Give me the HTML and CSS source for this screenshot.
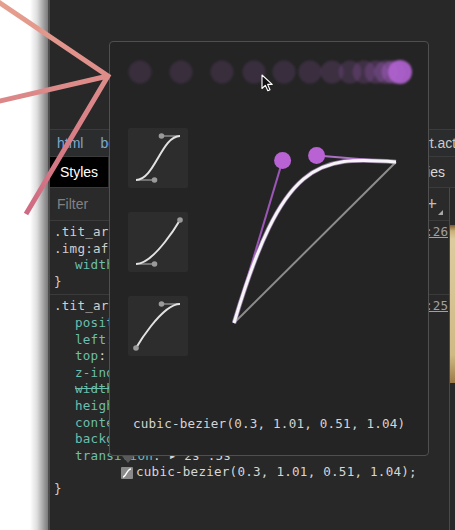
FILE: index.html
```html
<!DOCTYPE html>
<html>
<head>
<meta charset="utf-8">
<link rel="stylesheet" href="styles.css">
</head>
<body>
<div class="page">
  <div class="shade"></div>
  <div class="devtools">
    <div class="top"><div class="frame-tag">&lt;/iframe&gt;</div></div>
    <div class="crumbs">
      <span>html</span><span>body</span><span>div.wrap</span>
      <span class="crumb-end">div.tit_art.active</span>
    </div>
    <div class="tabs">
      <div class="tab-active">Styles</div>
      <div class="tab-right">Properties</div>
    </div>
    <div class="body">
      <div class="styles">
        <div class="filter">
          <span class="filter-text">Filter</span>
          <span class="filter-tools"><span class="plus">+</span><span class="corner"></span></span>
        </div>
        <div class="rule rule-first">
          <div class="line"><span class="sel">.tit_arrow,</span><span class="src">style.css:26</span></div>
          <div class="line sel">.img:after {</div>
          <div class="line indent"><span class="prop">width</span>: 40px;</div>
          <div class="line sel">}</div>
        </div>
        <div class="rule">
          <div class="line"><span class="sel">.tit_arrow {</span><span class="src">style.css:25</span></div>
          <div class="line indent"><span class="prop">position</span>: absolute;</div>
          <div class="line indent"><span class="prop">left</span>: 0;</div>
          <div class="line indent"><span class="prop">top</span>: 0;</div>
          <div class="line indent"><span class="prop">z-index</span>: 2;</div>
          <div class="line indent strike"><span class="prop">width</span>: 100%;</div>
          <div class="line indent"><span class="prop">height</span>: 100%;</div>
          <div class="line indent"><span class="prop">content</span>: '';</div>
          <div class="line indent"><span class="prop">background</span>: #fff;</div>
          <div class="line indent"><span class="prop">transition</span>: ▸ 2s .5s</div>
          <div class="line cont"><span class="swatch"><svg width="12" height="12" viewBox="0 0 12 12"><path d="M2 10 C5 10 6 2 10 2" fill="none" stroke="#fff" stroke-width="1.4"/></svg></span>cubic-bezier(0.3, 1.01, 0.51, 1.04);</div>
          <div class="line sel">}</div>
        </div>
      </div>
      <div class="side"><div class="side-img"></div></div>
    </div>
  </div>

  <div class="popover">
    <svg class="preview" width="318" height="60" viewBox="0 0 318 60">
      <defs><filter id="soft"><feGaussianBlur stdDeviation="0.8"/></filter></defs>
      <g fill="#b062cf" filter="url(#soft)">
        <circle cx="30" cy="30" r="11.5" opacity="0.14"/>
        <circle cx="71" cy="30" r="11.5" opacity="0.14"/>
        <circle cx="112" cy="30" r="11.5" opacity="0.14"/>
        <circle cx="144" cy="30" r="11.5" opacity="0.15"/>
        <circle cx="174" cy="30" r="11.5" opacity="0.15"/>
        <circle cx="200" cy="30" r="11.5" opacity="0.16"/>
        <circle cx="222" cy="30" r="11.5" opacity="0.17"/>
        <circle cx="240" cy="30" r="11.5" opacity="0.18"/>
        <circle cx="254" cy="30" r="11.5" opacity="0.2"/>
        <circle cx="266" cy="30" r="11.5" opacity="0.24"/>
        <circle cx="276" cy="30" r="11.5" opacity="0.3"/>
        <circle cx="283" cy="30" r="11.5" opacity="0.4"/>
        <circle cx="290" cy="30" r="12" opacity="0.92"/>
      </g>
    </svg>
    <svg class="cursor" width="13" height="18" viewBox="0 0 13 18">
      <path d="M1 1 L1 14.5 L4.3 11.3 L6.8 16.8 L9 15.8 L6.6 10.4 L11.2 10.4 Z" fill="#111" stroke="#fff" stroke-width="1.1" stroke-linejoin="round"/>
    </svg>
    <div class="editor">
      <div class="presets">
        <svg class="preset" width="60" height="60" viewBox="0 0 60 60">
          <g stroke="#8a8a8a" stroke-width="1.5"><line x1="8" y1="52" x2="26.5" y2="52"/><line x1="52" y1="8" x2="33.5" y2="8"/></g>
          <path d="M8 52 C26.5 52 33.5 8 52 8" fill="none" stroke="#e2e2e2" stroke-width="2"/>
          <g fill="#9a9a9a"><circle cx="26.5" cy="52" r="2.8"/><circle cx="33.5" cy="8" r="2.8"/></g>
        </svg>
        <svg class="preset" width="60" height="60" viewBox="0 0 60 60">
          <g stroke="#8a8a8a" stroke-width="1.5"><line x1="8" y1="52" x2="26.5" y2="52"/></g>
          <path d="M8 52 C26.5 52 52 8 52 8" fill="none" stroke="#e2e2e2" stroke-width="2"/>
          <g fill="#9a9a9a"><circle cx="26.5" cy="52" r="2.8"/><circle cx="52" cy="8" r="2.8"/></g>
        </svg>
        <svg class="preset" width="60" height="60" viewBox="0 0 60 60">
          <g stroke="#8a8a8a" stroke-width="1.5"><line x1="52" y1="8" x2="33.5" y2="8"/></g>
          <path d="M8 52 C8 52 33.5 8 52 8" fill="none" stroke="#e2e2e2" stroke-width="2"/>
          <g fill="#9a9a9a"><circle cx="8" cy="52" r="2.8"/><circle cx="33.5" cy="8" r="2.8"/></g>
        </svg>
      </div>
      <svg class="curve" width="210" height="272" viewBox="0 0 210 272">
        <line x1="24" y1="195" x2="186" y2="34" stroke="#8c8c8c" stroke-width="2"/>
        <line x1="24" y1="195" x2="72.6" y2="32.4" stroke="#9b56b6" stroke-width="2"/>
        <line x1="186" y1="34" x2="106.6" y2="27.6" stroke="#a96fc4" stroke-width="2"/>
        <path d="M24 195 C72.6 32.4 106.6 27.6 186 34" fill="none" stroke="#b898cc" stroke-width="4.5" opacity="0.7"/>
        <path d="M24 195 C72.6 32.4 106.6 27.6 186 34" fill="none" stroke="#f6f4f7" stroke-width="3"/>
        <g fill="#b962d4"><circle cx="72.6" cy="32.4" r="8.5"/><circle cx="106.6" cy="27.6" r="8.5"/></g>
      </svg>
    </div>
    <div class="value">cubic-bezier(0.3, 1.01, 0.51, 1.04)</div>
  </div>

  <svg class="arrows" width="455" height="530" viewBox="0 0 455 530">
    <defs>
      <linearGradient id="pink" gradientUnits="userSpaceOnUse" x1="0" y1="0" x2="0" y2="214">
        <stop offset="0" stop-color="#e6a08e"/>
        <stop offset="1" stop-color="#cf6a82"/>
      </linearGradient>
    </defs>
    <g fill="none" stroke="url(#pink)" stroke-width="5" stroke-linejoin="miter">
      <polyline points="-3,1 108,76 26,214"/>
      <line x1="-3" y1="101.7" x2="108" y2="76"/>
    </g>
  </svg>
</div>
</body>
</html>
```
FILE: styles.css
```css
* { box-sizing: border-box; margin: 0; padding: 0; }
html, body { width: 455px; height: 530px; overflow: hidden; background: #fff; }

.page { position: relative; display: flex; height: 530px; }

.shade {
  width: 48px; flex: none;
  background: linear-gradient(to right, #fff 0, #fff 30px, #dedede 37px, #a6a6a6 43px, #7a7a7a 48px);
}

.devtools {
  flex: 1; min-width: 0;
  display: flex; flex-direction: column;
  background: #282828;
  border-left: 2px solid #4b4b4b;
  overflow: hidden;
}

.top { height: 130px; flex: none; border-bottom: 1px solid #3b3b3b; overflow: hidden; padding-left: 16px; }
.frame-tag { font: bold 13px/16px "Liberation Sans", sans-serif; color: #7fa8d6; margin-top: -12px; opacity: .8; }

.crumbs {
  height: 27px; flex: none;
  display: flex; align-items: center; gap: 17px;
  padding-left: 7px;
  background: #2b2c2e;
  border-bottom: 1px solid #3b3b3b;
  font: 14px "Liberation Sans", sans-serif; color: #7ea9cc;
  white-space: nowrap;
}
.crumb-end { margin-left: auto; margin-right: -19px; color: #c9c9c9; }

.tabs {
  height: 31px; flex: none;
  display: flex;
  background: #2c2c2c;
  border-bottom: 1px solid #3b3b3b;
  font: 14px "Liberation Sans", sans-serif;
}
.tab-active { background: #000; color: #fff; padding: 0 10px; display: flex; align-items: center; }
.tab-right { margin-left: auto; padding-right: 10px; color: #d8d8d8; display: flex; align-items: center; }

.body { flex: 1; display: flex; min-height: 0; }
.styles { width: 400px; flex: none; border-right: 1px solid #4a4a4a; }
.side { flex: 1; }
.side-img {
  margin-top: 37px; height: 158px;
  background: linear-gradient(to bottom, #7a5a30 0, #c9b07a 6px, #dccb9c 14px, #d8c596 60px, #cfb985 130px, #9b7a48 158px);
}

.filter {
  height: 33px;
  display: flex; align-items: center;
  padding-left: 7px;
  background: #2a2a2a;
  border-bottom: 1px solid #3b3b3b;
  font: 14px "Liberation Sans", sans-serif;
}
.filter-text { color: #828282; }
.filter-tools { margin-left: auto; margin-right: 6px; display: flex; align-items: flex-end; }
.plus { color: #bdbdbd; font: 18px/18px "Liberation Sans", sans-serif; }
.corner {
  width: 0; height: 0; margin-left: 1px; margin-bottom: -2px;
  border-left: 5px solid transparent; border-bottom: 5px solid #a8a8a8;
}

.rule {
  padding: 3px 0 1px 4px;
  border-bottom: 1px solid #3b3b3b;
  font: 12.6px/16.6px "DejaVu Sans Mono", monospace;
  letter-spacing: 0.22px;
  color: #d6d6d6;
  white-space: nowrap;
}
.rule-first { padding-bottom: 4px; }
.rule:last-child { border-bottom: 0; }
.line { display: flex; align-items: center; height: 16.6px; }
.sel { color: #cfcfcf; }
.src { margin-left: auto; margin-right: 1px; color: #a0a0a0; text-decoration: underline; letter-spacing: 0; }
.indent { padding-left: 21px; }
.prop { color: #6cbfae; }
.strike { text-decoration: line-through; color: #d6d6d6; }
.strike .prop { text-decoration: line-through; }
.cont { padding-left: 67px; }
.swatch {
  width: 12px; height: 12px; margin-right: 3px;
  background: #8a8a8a; border-radius: 1px;
  display: flex;
}

.popover {
  position: absolute; left: 109px; top: 41px;
  width: 320px; height: 415px;
  border: 1px solid #4f4f4f; border-radius: 4px;
  background: #242424;
  display: flex; flex-direction: column;
}
.popover::after {
  content: ""; position: absolute; left: 12px; bottom: -8px;
  border-left: 6px solid transparent; border-right: 6px solid transparent;
  border-top: 7px solid #5a5a5a;
}
.preview { display: block; flex: none; }
.cursor { position: absolute; left: 151px; top: 32px; }
.editor { display: flex; gap: 22px; margin-top: 26px; padding-left: 18px; }
.presets { display: flex; flex-direction: column; gap: 24px; }
.preset { display: block; background: #2d2d2d; border-radius: 2px; }
.curve { display: block; }
.value {
  margin-top: auto;
  padding: 0 0 23px 23px;
  font: 12.6px/17px "DejaVu Sans Mono", monospace;
  letter-spacing: 0.2px;
  color: #d4d4d4;
}

.arrows { position: absolute; left: 0; top: 0; pointer-events: none; }
```
